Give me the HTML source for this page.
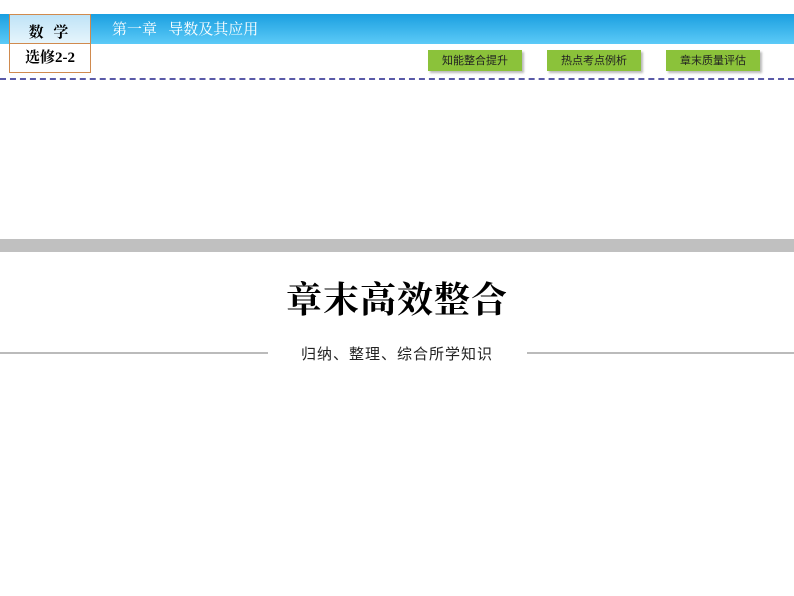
<!DOCTYPE html>
<html><head><meta charset="utf-8"><style>
body{margin:0;width:794px;height:596px;background:#fff;position:relative;overflow:hidden;font-family:"Liberation Serif","Noto Serif CJK SC",serif}
.bar{position:absolute;left:0;top:14px;width:794px;height:30px;background:linear-gradient(#1b9fe0,#5ccaf7)}
.box{position:absolute;left:9px;top:14px;width:80px;height:57px;border:1px solid #d08a4e;background:#fff}
.box .t{height:28px;border-bottom:1px solid #d08a4e;background:linear-gradient(#bfe3f7,#e6f5fc);text-align:center;font-weight:bold;font-size:15px;line-height:36px;letter-spacing:3px}
.box .b{text-align:center;font-weight:bold;font-size:15px;line-height:29px}
.ch{position:absolute;left:112px;top:18px;color:#fff;font-size:15px}
.btn{position:absolute;top:50px;width:94px;height:21px;background:#8bc23a;box-shadow:2px 2px 2px #bbb;font-family:"Noto Sans CJK SC",sans-serif;font-size:11px;line-height:21px;text-align:center;color:#222}
.dash{position:absolute;left:0;top:78px;width:794px;border-top:2px dashed #5a5aa8}
.gray{position:absolute;left:0;top:239px;width:794px;height:13px;background:#c0c0c0}
.title{position:absolute;left:0;width:794px;top:278px;text-align:center;font-size:36px;font-weight:bold;line-height:44px;letter-spacing:1px}
.ln{position:absolute;top:352px;height:2px;background:#bbb}
.sub{position:absolute;left:0;width:794px;top:343px;text-align:center;font-family:"Noto Sans CJK SC",sans-serif;font-size:15px;line-height:22px;color:#222;letter-spacing:1px}
</style></head><body>
<div class="bar"></div>
<div class="box"><div class="t">数 学</div><div class="b">选修2-2</div></div>
<div class="ch">第一章&nbsp;&nbsp;&nbsp;导数及其应用</div>
<div class="btn" style="left:428px">知能整合提升</div>
<div class="btn" style="left:547px">热点考点例析</div>
<div class="btn" style="left:666px">章末质量评估</div>
<div class="dash"></div>
<div class="gray"></div>
<div class="title">章末高效整合</div>
<div class="ln" style="left:0;width:268px"></div>
<div class="ln" style="left:527px;width:267px"></div>
<div class="sub">归纳、整理、综合所学知识</div>
</body></html>
